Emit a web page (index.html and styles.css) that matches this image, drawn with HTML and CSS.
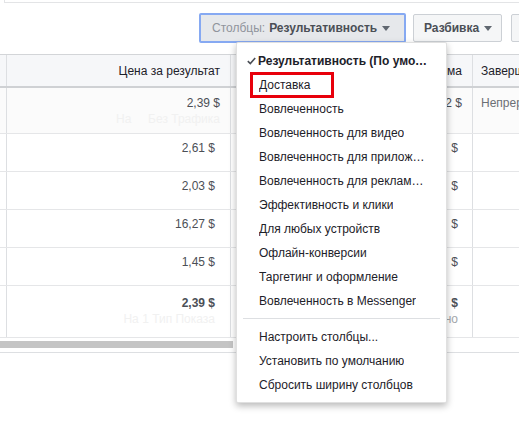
FILE: index.html
```html
<!DOCTYPE html>
<html lang="ru">
<head>
  <meta charset="UTF-8" />
  <title>Ads Manager</title>
  <link rel="stylesheet" href="styles.css">
</head>
<body>

  <div class="top-line"></div>

  <div class="toolbar">
    <button class="btn btn-columns">
      <span class="btn-label">Столбцы:</span> Результативность <span class="caret"></span>
    </button>
    <button class="btn btn-break">Разбивка <span class="caret"></span></button>
    <button class="btn btn-more"></button>
  </div>

  <div class="grid">
    <div class="row head">
      <div class="cell"></div>
      <div class="cell num">Цена за результат</div>
      <div class="cell num">Потраченная сумма</div>
      <div class="cell">Завершение</div>
    </div>

    <div class="row first">
      <div class="cell"></div>
      <div class="cell num">2,39 $<div class="faint">На &nbsp; &nbsp; Без Трафика</div></div>
      <div class="cell num">1 481,02 $</div>
      <div class="cell gray">Непрерывно</div>
    </div>
    <div class="row">
      <div class="cell"></div>
      <div class="cell num inset">2,61 $</div>
      <div class="cell num inset">523,18&nbsp;&nbsp;$</div>
      <div class="cell"></div>
    </div>
    <div class="row">
      <div class="cell"></div>
      <div class="cell num inset">2,03 $</div>
      <div class="cell num inset">412,40&nbsp;&nbsp;$</div>
      <div class="cell"></div>
    </div>
    <div class="row">
      <div class="cell"></div>
      <div class="cell num inset">16,27 $</div>
      <div class="cell num inset">211,51&nbsp;&nbsp;$</div>
      <div class="cell"></div>
    </div>
    <div class="row">
      <div class="cell"></div>
      <div class="cell num inset">1,45 $</div>
      <div class="cell num inset">333,93&nbsp;&nbsp;$</div>
      <div class="cell"></div>
    </div>

    <div class="row total">
      <div class="cell"></div>
      <div class="cell num inset"><b>2,39 $</b><div class="faint">На 1 Тип Показа</div></div>
      <div class="cell num inset"><b>2 962,04&nbsp;&nbsp;$</b><div class="sub">Потрачено</div></div>
      <div class="cell"></div>
    </div>

    <div class="scroll"><div class="thumb"></div></div>
  </div>

  <!-- dropdown of the columns button -->
  <div class="menu">
    <div class="item checked">
      <svg class="check" width="9" height="8" viewBox="0 0 9 8"><path d="M0.8 4.2 L3.3 6.6 L8.2 0.9" fill="none" stroke="#4b4f56" stroke-width="1.6"/></svg>
      <span class="txt">Результативность (По умолчанию)</span>
    </div>
    <div class="item"><span class="txt">Доставка</span></div>
    <div class="item"><span class="txt">Вовлеченность</span></div>
    <div class="item"><span class="txt">Вовлеченность для видео</span></div>
    <div class="item"><span class="txt">Вовлеченность для приложения</span></div>
    <div class="item"><span class="txt">Вовлеченность для рекламы на Странице</span></div>
    <div class="item"><span class="txt">Эффективность и клики</span></div>
    <div class="item"><span class="txt">Для любых устройств</span></div>
    <div class="item"><span class="txt">Офлайн-конверсии</span></div>
    <div class="item"><span class="txt">Таргетинг и оформление</span></div>
    <div class="item"><span class="txt">Вовлеченность в Messenger</span></div>
    <div class="sep"></div>
    <div class="item"><span class="txt">Настроить столбцы...</span></div>
    <div class="item"><span class="txt">Установить по умолчанию</span></div>
    <div class="item"><span class="txt">Сбросить ширину столбцов</span></div>

    <div class="mark"></div>
  </div>

</body>
</html>
```

FILE: styles.css
```css
body {
  margin: 0;
  width: 519px;
  height: 423px;
  overflow: hidden;
  background: #fff;
  font-family: "Liberation Sans", Arial, sans-serif;
  font-size: 12px;
  color: #1d2129;
  position: relative;
}
.top-line {
  height: 2px;
  margin-left: 4px;
  border-left: 1px solid #e3e4e6;
  border-bottom: 1px solid #e3e4e6;
}
.toolbar {
  display: flex;
  align-items: center;
  padding: 10px 0 0 199px;
  margin-bottom: 11px;
  height: 30px;
  white-space: nowrap;
}
.btn {
  box-sizing: border-box;
  height: 28px;
  padding: 0 10px;
  border: 1px solid #ccd0d5;
  border-radius: 2px;
  background: #f5f6f7;
  color: #4b4f56;
  font-family: inherit;
  font-size: 12px;
  font-weight: bold;
  display: flex;
  align-items: center;
  flex-shrink: 0;
}
.btn-columns {
  width: 207px;
  height: 30px;
  border: 2px solid #86a9f2;
  background: #e6e8eb;
  padding-left: 11px;
}
.btn-label {
  color: #90949c;
  font-weight: normal;
  margin-right: 4px;
}
.btn-break {
  width: 89px;
  margin-left: 7px;
  padding-left: 10px;
}
.btn-more {
  width: 40px;
  margin-left: 9px;
}
.caret {
  display: inline-block;
  width: 0;
  height: 0;
  margin-left: 5px;
  border-left: 4px solid transparent;
  border-right: 4px solid transparent;
  border-top: 5px solid #606770;
}

.grid {
  border-top: 1px solid #d3d5d8;
}
.row {
  display: grid;
  grid-template-columns: 7px 224px 242px 46px;
  box-sizing: border-box;
  height: 38px;
  border-bottom: 1px solid #e5e6e8;
}
.cell {
  border-right: 1px solid #dddfe2;
  padding: 7px 8px 0 8px;
  line-height: 14px;
  white-space: nowrap;
  overflow: hidden;
  color: #4b4f56;
}
.cell:first-child {
  padding: 0;
}
.cell:last-child {
  border-right: none;
}
.num {
  text-align: right;
  padding-right: 10px;
}
.inset {
  padding-right: 15px;
}
.row .cell:nth-child(3).inset {
  padding-right: 14px;
}
.head {
  height: 33px;
  background: #f6f7f9;
  border-bottom: 2px solid #cfd1d4;
}
.head .cell {
  padding-top: 9px;
  color: #1d2129;
}
.first {
  height: 46px;
  background: #fbfbfb;
}
.first .cell {
  padding-top: 8px;
}
.total {
  height: 52px;
}
.total .cell {
  padding-top: 10px;
}
.faint {
  color: #f1f1f1;
  margin-top: 2px;
}
.sub {
  color: #a3a6ab;
  margin-top: 2px;
}
.gray {
  color: #6b6f75;
}
.scroll {
  height: 15px;
  box-sizing: border-box;
  padding-top: 3px;
  border-bottom: 1px solid #dddfe2;
}
.thumb {
  width: 233px;
  height: 7px;
  background: #c4c4c4;
}

.menu {
  position: absolute;
  left: 236px;
  top: 42px;
  width: 211px;
  box-sizing: border-box;
  padding: 6px 0 5px;
  background: #fff;
  border: 1px solid rgba(0, 0, 0, 0.12);
  border-radius: 2px;
  box-shadow: 0 3px 7px rgba(0, 0, 0, 0.28);
}
.item {
  height: 24px;
  line-height: 24px;
  padding: 0 18px 0 22px;
  display: flex;
  align-items: center;
  color: #1d2129;
  white-space: nowrap;
}
.txt {
  overflow: hidden;
  text-overflow: ellipsis;
}
.checked {
  padding-left: 10px;
  font-weight: bold;
}
.check {
  margin-right: 2px;
  flex-shrink: 0;
}
.sep {
  height: 1px;
  margin: 5px 6px 6px 6px;
  background: #dddfe2;
}
.mark {
  position: absolute;
  left: 13px;
  top: 29px;
  width: 84px;
  height: 26px;
  box-sizing: border-box;
  border: 3px solid #e8000b;
}
```
